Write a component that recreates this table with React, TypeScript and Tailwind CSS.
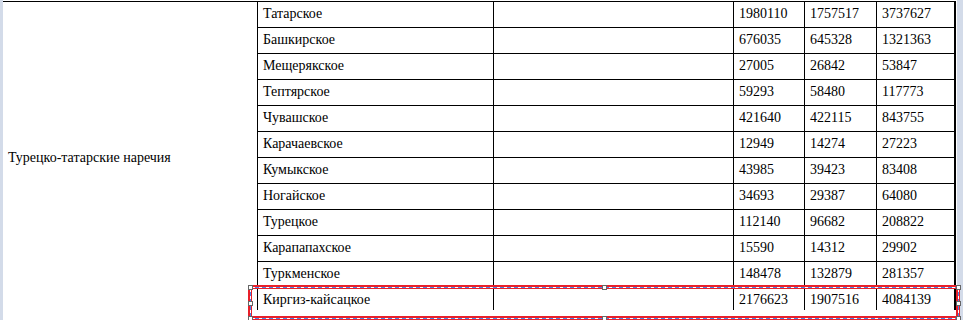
const rows = [
  ["Татарское", "1980110", "1757517", "3737627"],
  ["Башкирское", "676035", "645328", "1321363"],
  ["Мещерякское", "27005", "26842", "53847"],
  ["Тептярское", "59293", "58480", "117773"],
  ["Чувашское", "421640", "422115", "843755"],
  ["Карачаевское", "12949", "14274", "27223"],
  ["Кумыкское", "43985", "39423", "83408"],
  ["Ногайское", "34693", "29387", "64080"],
  ["Турецкое", "112140", "96682", "208822"],
  ["Карапапахское", "15590", "14312", "29902"],
  ["Туркменское", "148478", "132879", "281357"],
  ["Киргиз-кайсацкое", "2176623", "1907516", "4084139"],
];

function Handle({ className }: { className: string }) {
  return (
    <div
      className={
        "absolute w-[5px] h-[5px] bg-white border border-[#666666] " + className
      }
    />
  );
}

function Selection() {
  return (
    <div className="absolute left-[248px] top-[285px] w-[713px] h-[35px]">
      {/* top */}
      <div className="absolute left-0 right-0 top-0 h-[4px] pt-[2px] bg-[#e8202a]">
        <div className="h-px w-full bg-[repeating-linear-gradient(90deg,#4a86e8_0_4px,#ffffff_4px_7px)]" />
      </div>
      {/* bottom */}
      <div className="absolute left-0 right-0 top-[31px] h-[4px] pt-[2px] bg-[#e8202a]">
        <div className="h-px w-full bg-[repeating-linear-gradient(90deg,#4a86e8_0_4px,#ffffff_4px_7px)]" />
      </div>
      {/* left */}
      <div className="absolute left-0 top-0 bottom-0 w-[4px] pl-[2px] bg-[#e8202a]">
        <div className="w-px h-full bg-[repeating-linear-gradient(180deg,#4a86e8_0_4px,#ffffff_4px_7px)]" />
      </div>
      {/* right */}
      <div className="absolute left-[708px] top-0 bottom-0 w-[4px] pl-[2px] bg-[#e8202a]">
        <div className="w-px h-full bg-[repeating-linear-gradient(180deg,#4a86e8_0_4px,#ffffff_4px_7px)]" />
      </div>

      <Handle className="left-0 top-0" />
      <Handle className="left-[354px] top-0" />
      <Handle className="left-[708px] top-0" />
      <Handle className="left-0 top-[16px]" />
      <Handle className="left-[708px] top-[16px]" />
      <Handle className="left-0 top-[31px]" />
      <Handle className="left-[354px] top-[31px]" />
      <Handle className="left-[708px] top-[31px]" />
    </div>
  );
}

export default function App() {
  return (
    <div className="relative flex w-[963px] h-[320px] overflow-hidden bg-white text-black [font-family:'Liberation_Serif',serif] text-[14px] leading-[16px]">
      <div className="w-[3px] shrink-0 bg-[#d3dbe9]" />

      <div className="w-[954px] shrink-0 pt-[1px]">
        <div className="w-[953px] h-[309px] overflow-hidden">
          <div className="flex border-t border-r-2 border-black">
            <div className="w-[254px] h-[312px] shrink-0 flex items-center pl-[5px]">
              Турецко-татарские наречия
            </div>

            <div className="flex flex-col border-l border-black">
              {rows.map((r) => (
                <div key={r[0]} className="flex h-[26px] border-b border-black">
                  <div className="w-[235px] pl-[5px] pt-[4px]">{r[0]}</div>
                  <div className="w-[240px] border-l border-black" />
                  <div className="w-[71px] border-l border-black pl-[5px] pt-[4px]">
                    {r[1]}
                  </div>
                  <div className="w-[72px] border-l border-black pl-[5px] pt-[4px]">
                    {r[2]}
                  </div>
                  <div className="w-[78px] border-l border-black pl-[5px] pt-[4px]">
                    {r[3]}
                  </div>
                </div>
              ))}
            </div>
          </div>
        </div>
      </div>

      <div className="w-[6px] shrink-0 bg-[#d3dbe9]" />

      <Selection />
    </div>
  );
}
